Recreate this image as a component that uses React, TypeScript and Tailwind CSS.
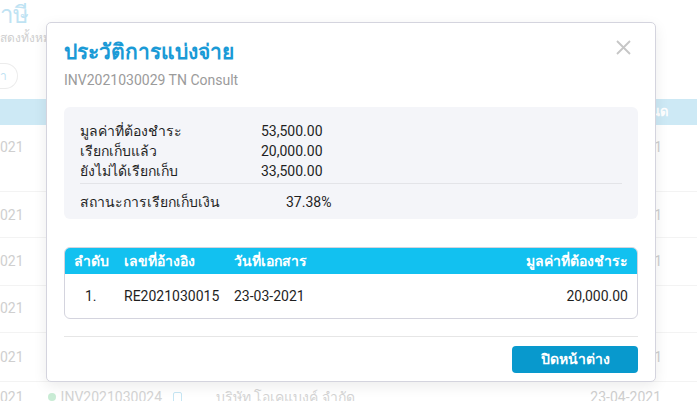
const summary = [
  { label: 'มูลค่าที่ต้องชำระ', value: '53,500.00' },
  { label: 'เรียกเก็บแล้ว', value: '20,000.00' },
  { label: 'ยังไม่ได้เรียกเก็บ', value: '33,500.00' },
];

// faded page rows behind the dialog (only the visible slivers are drawn)
const bgRows = [
  { h: 'h-[67px]', pt: 'pt-[12px]', right: '1' },
  { h: 'h-[46px]', pt: 'pt-[13px]', right: '1' },
  { h: 'h-[48px]', pt: 'pt-[13px]', right: '1' },
  { h: 'h-[47px]', pt: 'pt-[12px]', right: '' },
  { h: 'h-[49px]', pt: 'pt-[14px]', right: '1' },
];

function BackgroundPage() {
  return (
    <div className="w-[697px] h-[401px] overflow-hidden bg-white text-[#cfcfcf]">
      <div className="h-[30px] text-[24px] leading-[30px] text-[#bfe3f3] font-medium">าษี</div>
      <div className="h-[16px] text-[12px] leading-[16px] whitespace-nowrap">สดงทั้งหม</div>
      <div className="mt-[17px] flex">
        <div className="w-[18px] h-[26px] rounded-r-full border border-l-0 border-[#ececec] flex items-center text-[12px] text-[#bfe3f3]">
          า
        </div>
      </div>
      <div className="mt-[10px] h-[26px] bg-[#cde9f5] flex items-center justify-end pr-[29px] text-[13px] font-bold text-white">
        นด
      </div>
      {bgRows.map((r, i) => (
        <div
          key={i}
          className={`${r.h} ${r.pt} border-b border-[#f3f3f3] flex justify-between text-[14px] leading-[20px]`}
        >
          <div>021</div>
          <div className="pr-[35px]">{r.right}</div>
        </div>
      ))}
      <div className="pt-[5px] flex items-center text-[14px] leading-[20px]">
        <div>021</div>
        <span className="ml-[24px] w-[8px] h-[8px] rounded-full bg-[#c9ecd5]" />
        <span className="ml-[5px] text-[#d4d4d4]">INV2021030024</span>
        <span className="ml-[11px] w-[9px] h-[11px] rounded-[2px] border border-[#c6e6f4]" />
        <span className="ml-[34px] text-[#d4d4d4]">บริษัท โอเคแบงค์ จำกัด</span>
        <span className="ml-auto pr-[36px]">23-04-2021</span>
      </div>
    </div>
  );
}

export default function App() {
  return (
    <div
      className="relative w-[697px] h-[401px] overflow-hidden"
      style={{ fontFamily: 'Roboto, "Noto Sans", "Liberation Sans", sans-serif' }}
    >
      <BackgroundPage />

      <div className="absolute left-[46px] top-[22px] w-[610px] h-[360px] bg-white border border-[#d4d4de] rounded-[5px] shadow-[0_4px_14px_rgba(0,0,0,0.08)] px-[17px] pt-[15px] flex flex-col">
        <button className="absolute right-[24px] top-[17px]">
          <svg width="15" height="15" viewBox="0 0 15 15" fill="none" stroke="#c6c6c6" strokeWidth="1.8">
            <path d="M1 1 14 14M14 1 1 14" />
          </svg>
        </button>

        <h2 className="text-[21px] leading-[28px] font-semibold text-[#1a9ad6]">ประวัติการแบ่งจ่าย</h2>
        <p className="mt-[4px] text-[14px] leading-[20px] text-[#9b9b9b]">INV2021030029 TN Consult</p>

        <div className="mt-[17px] h-[112px] rounded-[6px] bg-[#f4f5f9] px-4 pt-[14px] text-[14px] leading-[20px] text-[#1f1f1f]">
          {summary.map((s) => (
            <div key={s.label} className="flex">
              <div className="w-[181px]">{s.label}</div>
              <div>{s.value}</div>
            </div>
          ))}
          <div className="mt-[2px] border-t border-[#e3e4e8]" />
          <div className="mt-[8px] flex">
            <div className="w-[206px]">สถานะการเรียกเก็บเงิน</div>
            <div>37.38%</div>
          </div>
        </div>

        <div className="mt-[28px] h-[72px] rounded-[6px] border border-[#d4d4de] overflow-hidden text-[14px]">
          <div className="h-[26px] bg-[#12c1f0] flex items-center px-[9px] font-semibold text-white">
            <div className="w-[50px]">ลำดับ</div>
            <div className="w-[110px]">เลขที่อ้างอิง</div>
            <div className="flex-1">วันที่เอกสาร</div>
            <div>มูลค่าที่ต้องชำระ</div>
          </div>
          <div className="h-[45px] flex items-center px-[9px] text-[#1f1f1f]">
            <div className="w-[50px] pl-[11px]">1.</div>
            <div className="w-[110px]">RE2021030015</div>
            <div className="flex-1">23-03-2021</div>
            <div>20,000.00</div>
          </div>
        </div>

        <div className="mt-[17px] border-t border-[#e6e6e6]" />
        <div className="mt-[9px] flex justify-end">
          <button className="w-[126px] h-[27px] rounded-[4px] bg-[#0899cd] text-[14px] font-semibold text-white">
            ปิดหน้าต่าง
          </button>
        </div>
      </div>
    </div>
  );
}
